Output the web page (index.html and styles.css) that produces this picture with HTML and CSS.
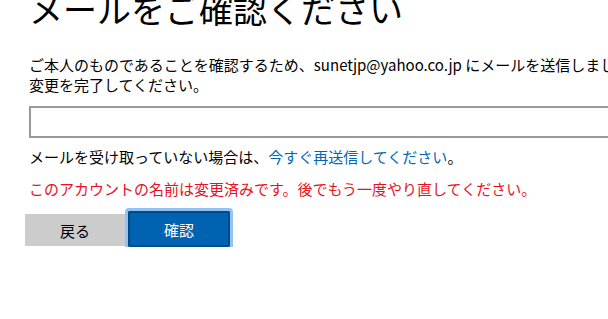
FILE: index.html
```html
<!DOCTYPE html>
<html lang="ja">
<head>
  <meta charset="UTF-8" />
  <meta name="viewport" content="width=device-width, initial-scale=1.0" />
  <title>メールをご確認ください</title>
  <link rel="stylesheet" href="styles.css">
</head>
<body>
  <div class="page">
    <h1 class="title">メールをご確認ください</h1>
    <p class="intro">ご本人のものであることを確認するため、sunetjp@yahoo.co.jp にメールを送信しました。メールに記載されたリンクから<br>変更を完了してください。</p>
    <div class="field">
      <input type="text" class="code-input" />
    </div>
    <p class="resend">メールを受け取っていない場合は、<a href="#" class="link">今すぐ再送信してください</a>。</p>
    <p class="error">このアカウントの名前は変更済みです。後でもう一度やり直してください。</p>
    <div class="actions">
      <button class="btn btn-back">戻る</button>
      <button class="btn btn-primary">確認</button>
    </div>
  </div>
</body>
</html>
```

FILE: styles.css
```css
* {
  box-sizing: border-box;
  margin: 0;
  padding: 0;
}
body {
  font-family: "Noto Sans CJK JP", "Liberation Sans", sans-serif;
  font-size: 15px;
  color: #000;
  background-color: #fff;
  overflow: hidden;
}
.page {
  width: 820px;
  padding-left: 29px;
}
.title {
  font-size: 34px;
  font-weight: normal;
  line-height: 41px;
  margin-top: -12px;
  white-space: nowrap;
}
.intro {
  margin-top: 26px;
  line-height: 20px;
  white-space: nowrap;
}
.field {
  margin-top: 11px;
}
.code-input {
  display: block;
  width: 100%;
  height: 32px;
  border: 2px solid #999;
  background-color: #fff;
}
.resend {
  margin-top: 10px;
  line-height: 18px;
}
.link {
  color: #0067b8;
  text-decoration: none;
}
.error {
  margin-top: 14px;
  line-height: 18px;
  color: #e81123;
}
.actions {
  display: flex;
  align-items: flex-end;
  gap: 3px;
  margin-top: 13px;
  margin-left: -4px;
}
.btn {
  font-family: inherit;
  font-size: 15px;
  width: 100px;
  height: 32px;
  border: none;
  cursor: pointer;
}
.btn-back {
  background-color: #cccccc;
  color: #000;
  margin-bottom: 1px;
}
.btn-primary {
  width: 102px;
  height: 36px;
  background-color: #0063b1;
  color: #fff;
  border: 2px solid #004a86;
  outline: 3px solid #93c3f6;
  border-radius: 1px;
}
```
